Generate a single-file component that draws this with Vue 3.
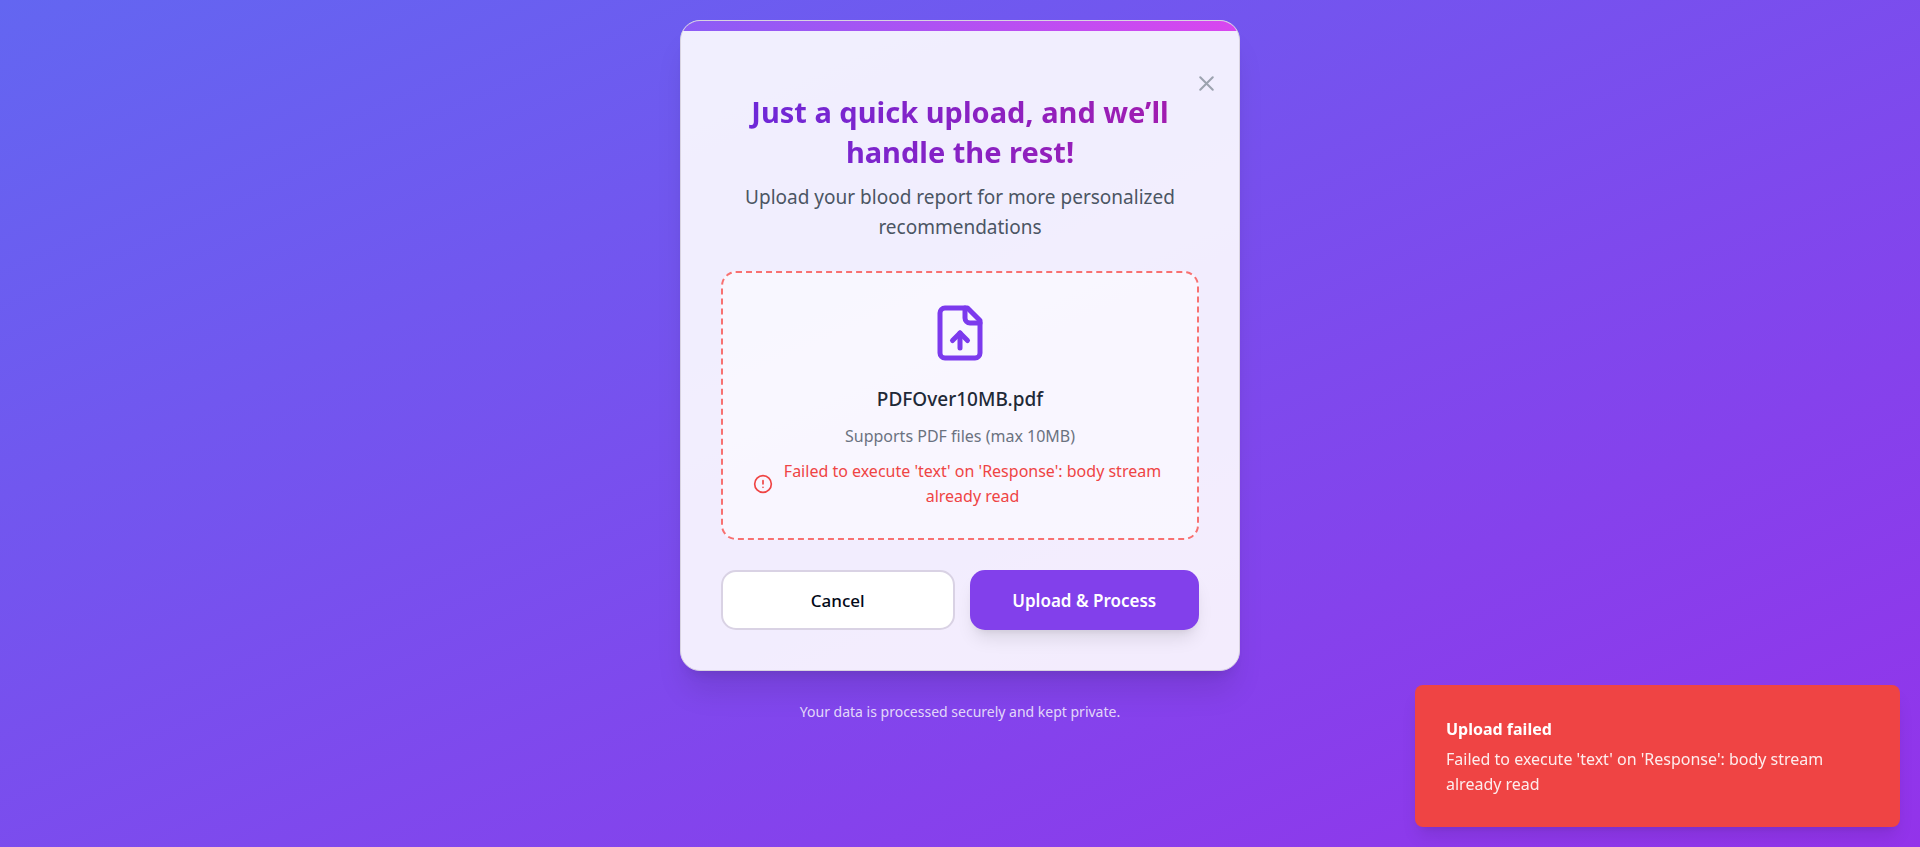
<script setup>
import { ref } from 'vue'

const fileName = ref('PDFOver10MB.pdf')
const error = ref("Failed to execute 'text' on 'Response': body stream already read")
</script>

<template>
  <main class="page">
    <section class="card" aria-labelledby="upload-title">
      <div class="accent"></div>
      <button class="close" type="button" aria-label="Close">
        <svg viewBox="0 0 24 24" class="line-icon"><path d="M18 6 6 18M6 6l12 12" /></svg>
      </button>
      <header class="header">
        <h1 id="upload-title" class="title">Just a quick upload, and we’ll handle the rest!</h1>
        <p class="subtitle">Upload your blood report for more personalized recommendations</p>
      </header>
      <div class="dropzone">
        <svg viewBox="0 0 24 24" class="line-icon file-icon" aria-hidden="true">
          <path d="M15 2H6a2 2 0 0 0-2 2v16a2 2 0 0 0 2 2h12a2 2 0 0 0 2-2V7Z" />
          <path d="M14 2v4a2 2 0 0 0 2 2h4" />
          <path d="M12 12v6" />
          <path d="m15 15-3-3-3 3" />
        </svg>
        <p class="file-name">{{ fileName }}</p>
        <p class="hint">Supports PDF files (max 10MB)</p>
        <div class="error" role="alert">
          <svg viewBox="0 0 24 24" class="line-icon error-icon" aria-hidden="true">
            <circle cx="12" cy="12" r="10" />
            <path d="M12 8v4M12 16h.01" />
          </svg>
          <span>{{ error }}</span>
        </div>
      </div>
      <div class="actions">
        <button class="btn cancel" type="button">Cancel</button>
        <button class="btn submit" type="button">Upload &amp; Process</button>
      </div>
    </section>
    <p class="privacy">Your data is processed securely and kept private.</p>

    <aside class="toast" role="status">
      <strong class="toast-title">Upload failed</strong>
      <p class="toast-text">{{ error }}</p>
    </aside>
  </main>
</template>

<style>
body {
  margin: 0;
}
</style>

<style scoped>
* {
  box-sizing: border-box;
}

h1,
p {
  margin: 0;
}

.page {
  display: flex;
  flex-direction: column;
  align-items: center;
  gap: 31px;
  min-height: 100vh;
  padding: 20px;
  background: linear-gradient(to bottom right, #6366f1, #9333ea);
  font-family: "Segoe UI", "Noto Sans", "Open Sans", sans-serif;
  font-size: 16px;
  line-height: 25px;
}

.card {
  position: relative;
  width: 100%;
  max-width: 560px;
  padding: 71px 40px 40px;
  overflow: hidden;
  border: 1px solid #d8d3e0;
  border-radius: 20px;
  background: rgba(255, 255, 255, 0.9);
  box-shadow: 0 25px 31px -6px rgba(0, 0, 0, 0.1), 0 10px 12px -8px rgba(0, 0, 0, 0.1);
}

.accent {
  position: absolute;
  top: 0;
  left: 0;
  right: 0;
  height: 10px;
  background: linear-gradient(to right, #8b5cf6, #d946ef);
}

.close {
  position: absolute;
  top: 50px;
  right: 20px;
  width: 25px;
  height: 25px;
  padding: 0;
  border: 0;
  background: none;
  color: #9ca3af;
  cursor: pointer;
}

.line-icon {
  display: block;
  width: 100%;
  height: 100%;
  fill: none;
  stroke: currentColor;
  stroke-width: 2;
  stroke-linecap: round;
  stroke-linejoin: round;
}

.header {
  padding: 0 20px;
  margin-bottom: 29px;
  text-align: center;
}

.title {
  margin-bottom: 10px;
  background: linear-gradient(to right, #6d28d9, #a21caf);
  background-clip: text;
  -webkit-background-clip: text;
  color: transparent;
  font-size: 29px;
  font-weight: 700;
  line-height: 40px;
}

.subtitle {
  color: #4b5563;
  font-size: 19px;
  line-height: 30px;
}

.dropzone {
  display: flex;
  flex-direction: column;
  align-items: center;
  padding: 30px 30px 29px;
  border: 2px dashed #f87171;
  border-radius: 15px;
  background: rgba(255, 255, 255, 0.5);
  text-align: center;
}

.file-icon {
  width: 60px;
  height: 60px;
  margin-bottom: 21px;
  color: #7c3aed;
}

.file-name {
  margin-bottom: 10px;
  color: #1f2937;
  font-size: 19px;
  font-weight: 500;
  line-height: 30px;
}

.hint {
  margin-bottom: 10px;
  color: #6b7280;
}

.error {
  display: flex;
  align-items: center;
  gap: 5px;
  color: #ef4444;
}

.error-icon {
  flex: none;
  width: 20px;
  height: 20px;
}

.actions {
  display: flex;
  gap: 15px;
  margin-top: 30px;
}

.btn {
  flex: 1;
  height: 60px;
  padding: 0 20px;
  border: 0;
  border-radius: 15px;
  font: inherit;
  font-size: 17px;
  cursor: pointer;
}

.cancel {
  border: 2px solid #d9d2e4;
  background: #fff;
  color: #020817;
  font-weight: 500;
}

.submit {
  background: #8240eb;
  box-shadow: 0 12px 18px -4px rgba(0, 0, 0, 0.1), 0 5px 8px -5px rgba(0, 0, 0, 0.1);
  color: #fff;
  font-weight: 600;
}

.privacy {
  color: rgba(255, 255, 255, 0.8);
  font-size: 14px;
  line-height: 20px;
}

.toast {
  position: fixed;
  right: 20px;
  bottom: 20px;
  width: 485px;
  max-width: calc(100% - 40px);
  padding: 32px 31px 30px;
  border-radius: 8px;
  background: #ef4444;
  box-shadow: 0 12px 18px -4px rgba(0, 0, 0, 0.1), 0 5px 8px -5px rgba(0, 0, 0, 0.1);
  color: #fff;
}

.toast-title {
  display: block;
  margin-bottom: 5px;
  font-weight: 700;
}

.toast-text {
  opacity: 0.9;
}
</style>
